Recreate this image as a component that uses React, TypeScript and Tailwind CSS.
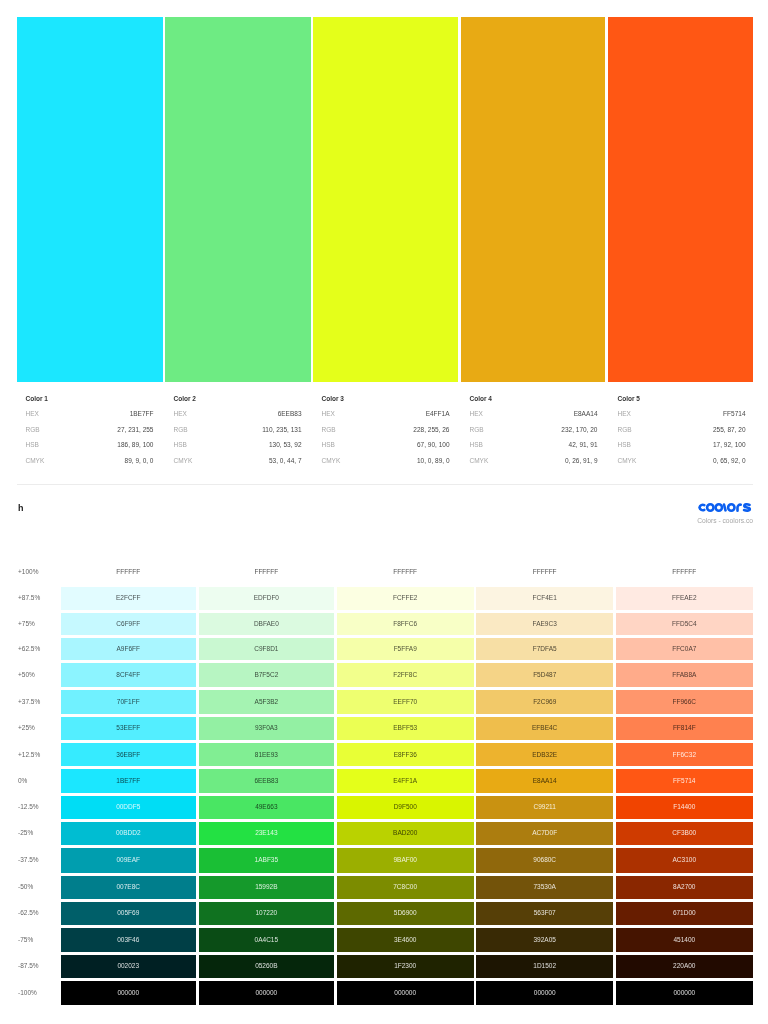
const FONT = "font-['Liberation_Sans',Arial,sans-serif]";

const swatches = ["#1BE7FF", "#6EEB83", "#E4FF1A", "#E8AA14", "#FF5714"];

const info = [
  { name: "Color 1", hex: "1BE7FF", rgb: "27, 231, 255", hsb: "186, 89, 100", cmyk: "89, 9, 0, 0" },
  { name: "Color 2", hex: "6EEB83", rgb: "110, 235, 131", hsb: "130, 53, 92", cmyk: "53, 0, 44, 7" },
  { name: "Color 3", hex: "E4FF1A", rgb: "228, 255, 26", hsb: "67, 90, 100", cmyk: "10, 0, 89, 0" },
  { name: "Color 4", hex: "E8AA14", rgb: "232, 170, 20", hsb: "42, 91, 91", cmyk: "0, 26, 91, 9" },
  { name: "Color 5", hex: "FF5714", rgb: "255, 87, 20", hsb: "17, 92, 100", cmyk: "0, 65, 92, 0" },
];

const labels = ["+100%", "+87.5%", "+75%", "+62.5%", "+50%", "+37.5%", "+25%", "+12.5%", "0%", "-12.5%", "-25%", "-37.5%", "-50%", "-62.5%", "-75%", "-87.5%", "-100%"];

const shades = [
  ["FFFFFF", "E2FCFF", "C6F9FF", "A9F6FF", "8CF4FF", "70F1FF", "53EEFF", "36EBFF", "1BE7FF", "00DDF5", "00BDD2", "009EAF", "007E8C", "005F69", "003F46", "002023", "000000"],
  ["FFFFFF", "EDFDF0", "DBFAE0", "C9F8D1", "B7F5C2", "A5F3B2", "93F0A3", "81EE93", "6EEB83", "49E663", "23E143", "1ABF35", "15992B", "107220", "0A4C15", "05260B", "000000"],
  ["FFFFFF", "FCFFE2", "F8FFC6", "F5FFA9", "F2FF8C", "EEFF70", "EBFF53", "E8FF36", "E4FF1A", "D9F500", "BAD200", "9BAF00", "7C8C00", "5D6900", "3E4600", "1F2300", "000000"],
  ["FFFFFF", "FCF4E1", "FAE9C3", "F7DFA5", "F5D487", "F2C969", "EFBE4C", "EDB32E", "E8AA14", "C99211", "AC7D0F", "90680C", "73530A", "563F07", "392A05", "1D1502", "000000"],
  ["FFFFFF", "FFEAE2", "FFD5C4", "FFC0A7", "FFAB8A", "FF966C", "FF814F", "FF6C32", "FF5714", "F14400", "CF3B00", "AC3100", "8A2700", "671D00", "451400", "220A00", "000000"],
];

// first row index (per column) whose code is printed in light text
const lightFrom = [9, 10, 11, 9, 7];

function CoolorsLogo() {
  return (
    <svg width="56" height="11" viewBox="0 0 56 11" fill="none" stroke="#0B5FF0" strokeWidth="2.6" strokeLinecap="round" strokeLinejoin="round">
      <path d="M7.300 3.200A3.300 3.300 0 0 0 2.500 5.500a3.300 3.300 0 0 0 4.800 2.300" />
      <circle cx="13.300" cy="5.500" r="3.200" />
      <circle cx="21.800" cy="5.500" r="3.200" />
      <path d="M27 2.500l1.500 5.800" />
      <circle cx="34.300" cy="5.500" r="3.200" />
      <path d="M40.500 8.700V5.500a2.800 2.800 0 0 1 3.200-2.800" />
      <path d="M52.500 2.900C50.500 2 47.300 2 47.300 4C47.300 6 52.800 5 52.800 7C52.800 9 49.300 9 47.100 8" />
    </svg>
  );
}

function InfoRow({ label, value }: { label: string; value: string }) {
  return (
    <div className="flex items-center justify-between h-[15.5px]">
      <span className="text-[#a6a6a6]">{label}</span>
      <span className="text-[#484848]">{value}</span>
    </div>
  );
}

export default function App() {
  return (
    <div className={`${FONT} bg-white w-[768px] h-[1024px] overflow-hidden pt-[17px] pl-[17px] text-[6.5px] leading-none blur-[0.3px]`}>
      <div className="grid gap-[2.7px] grid-cols-[145.7px_145.3px_144.7px_144.3px_145.7px] h-[365px]">
        {swatches.map((c) => (
          <div key={c} style={{ backgroundColor: c }} />
        ))}
      </div>

      <div className="flex gap-[3px] w-[737px] mt-[9px]">
        {info.map((c) => (
          <div key={c.name} className="flex-1 px-[8.5px]">
            <div className="h-[15.5px] flex items-center font-bold text-[#333]">{c.name}</div>
            <InfoRow label="HEX" value={c.hex} />
            <InfoRow label="RGB" value={c.rgb} />
            <InfoRow label="HSB" value={c.hsb} />
            <InfoRow label="CMYK" value={c.cmyk} />
          </div>
        ))}
      </div>

      <div className="w-[736px] h-px bg-[#ececec] mt-[15px]" />

      <div className="flex justify-between w-[736px] mt-[17px] h-[59.500px]">
        <div className="pl-[1px] pt-[2.500px] text-[9px] font-bold text-[#222]">h</div>
        <div className="flex flex-col items-end">
          <CoolorsLogo />
          <div className="mt-[5.500px] text-[#a6a6a6] text-[6.7px]">Colors - coolors.co</div>
        </div>
      </div>

      <div className="grid gap-x-[2.5px] gap-y-[3px] grid-cols-[41px_135.5px_135.7px_137px_137px_137.2px] grid-rows-[22.700px_23px_22.300px_22.300px_23.700px_24px_23.300px_23px_23.300px_23.400px_23.300px_24.400px_23.300px_23.300px_23.400px_23px_24.300px]">
        {labels.map((label, r) => (
          <div key={label} className="contents">
            <div className="flex items-center pl-[1px] text-[#666]">{label}</div>
            {shades.map((col, c) => (
              <div
                key={c}
                className={`flex items-center justify-center ${r >= lightFrom[c] ? "text-white/85" : "text-black/70"}`}
                style={{ backgroundColor: `#${col[r]}` }}
              >
                {col[r]}
              </div>
            ))}
          </div>
        ))}
      </div>
    </div>
  );
}
